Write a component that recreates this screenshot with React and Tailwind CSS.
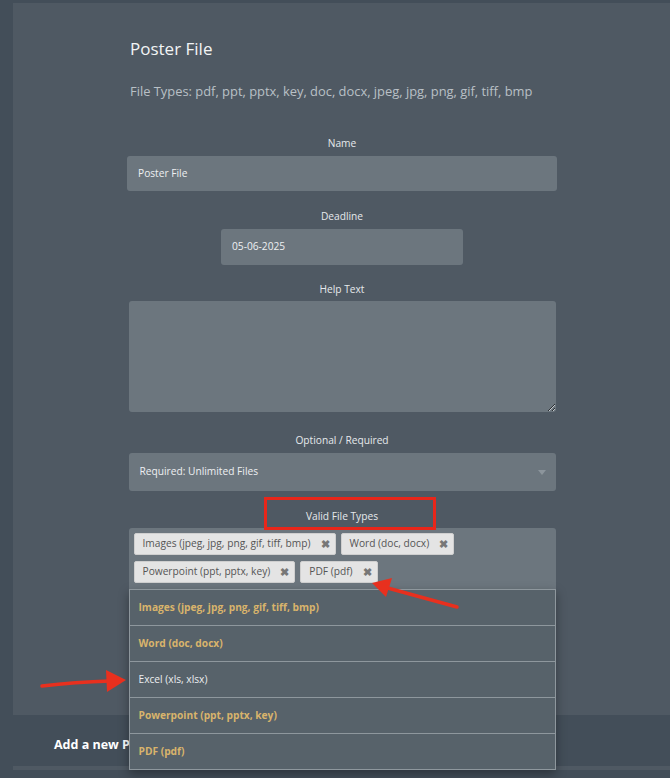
const TAGS = [
  ["Images (jpeg, jpg, png, gif, tiff, bmp)", "Word (doc, docx)"],
  ["Powerpoint (ppt, pptx, key)", "PDF (pdf)"],
];

const OPTIONS = [
  { label: "Images (jpeg, jpg, png, gif, tiff, bmp)", selected: true },
  { label: "Word (doc, docx)", selected: true },
  { label: "Excel (xls, xlsx)", selected: false },
  { label: "Powerpoint (ppt, pptx, key)", selected: true },
  { label: "PDF (pdf)", selected: true },
];

function Label({ children, className = "" }) {
  return (
    <div className={`text-center text-[10.2px] leading-[16px] text-[#e6e9ec] ${className}`}>
      {children}
    </div>
  );
}

function Tag({ text }) {
  return (
    <span className="flex h-[22px] items-center gap-[10px] rounded-[2px] border border-[#cfcfcf] bg-[#e4e4e4] pl-[8px] pr-[5px] text-[10.2px] text-[#555]">
      {text}
      <span className="text-[11px] font-bold text-[#777]">✖</span>
    </span>
  );
}

export default function App() {
  return (
    <div
      className="relative h-[778px] w-[670px] overflow-hidden bg-[#434e59]"
      style={{ fontFamily: '"Open Sans", "Noto Sans", sans-serif' }}
    >
      {/* Main panel */}
      <div className="ml-[13px] mt-[3px] h-[712px] bg-[#4f5963] pt-[34px]">
        <div className="ml-[114px] w-[430px]">
          <h2 className="pl-[3px] text-[17px] leading-[24px] text-[#f2f4f5]">Poster File</h2>
          <p className="mt-[20px] whitespace-nowrap pl-[3px] text-[12.9px] leading-[20px] text-[#b9c0c6]">
            File Types: pdf, ppt, pptx, key, doc, docx, jpeg, jpg, png, gif, tiff, bmp
          </p>

          <Label className="mt-[34px]">Name</Label>
          <div className="mt-[5px] flex h-[35px] items-center rounded-[3px] bg-[#6c767e] px-[11px] text-[10.2px] text-[#eef0f2]">
            Poster File
          </div>

          <Label className="mt-[17px]">Deadline</Label>
          <div className="mx-auto mt-[5px] flex h-[36px] w-[242px] items-center rounded-[3px] bg-[#6c767e] px-[11px] text-[10.2px] text-[#eef0f2]">
            05-06-2025
          </div>

          <Label className="mt-[16px]">Help Text</Label>
          <textarea
            readOnly
            className="mx-auto mt-[4px] block h-[111px] w-[427px] rounded-[3px] bg-[#6c767e] outline-none"
          />

          <Label className="mt-[20px]">Optional / Required</Label>
          <div className="mx-auto mt-[5px] flex h-[38px] w-[427px] items-center justify-between rounded-[3px] bg-[#6c767e] pl-[11px] pr-[10px] text-[10.2px] text-[#eef0f2]">
            Required: Unlimited Files
            <span className="h-0 w-0 border-x-[4px] border-t-[5px] border-x-transparent border-t-[#8c959c]" />
          </div>

          <Label className="mt-[17px]">Valid File Types</Label>
          <div className="relative mx-auto mt-[4px] w-[427px] rounded-t-[3px] bg-[#6c767e] p-[5px] pb-[6px]">
            <div className="flex flex-col gap-[6px]">
              {TAGS.map((row, i) => (
                <div key={i} className="flex gap-[5px]">
                  {row.map((t) => (
                    <Tag key={t} text={t} />
                  ))}
                </div>
              ))}
            </div>

            {/* Dropdown */}
            <ul className="absolute left-0 top-full z-10 w-[427px] border-x border-b border-[#8e979d] bg-[#57626a] shadow-[0_4px_10px_rgba(0,0,0,0.35)]">
              {OPTIONS.map((o) => (
                <li
                  key={o.label}
                  className={`flex h-[36px] items-center border-t border-[#8e979d] px-[9px] text-[10.2px] ${
                    o.selected ? "font-bold text-[#d9b46c]" : "text-[#eceef0]"
                  }`}
                >
                  {o.label}
                </li>
              ))}
            </ul>
          </div>
        </div>
      </div>

      {/* Below panel */}
      <div className="pl-[54px] pt-[21px] text-[12.5px] font-bold leading-[18px] text-white">
        Add a new Project File
      </div>
      <div className="ml-[13px] mt-[12px] h-[4px] bg-[#4f5963]" />

      {/* Annotations */}
      <div className="pointer-events-none absolute left-[264px] top-[497px] h-[33px] w-[172px] border-[3px] border-[#e8261a]" />
      <svg
        className="pointer-events-none absolute left-0 top-0 z-20"
        width="670"
        height="778"
        viewBox="0 0 670 778"
      >
        <path d="M457 607 L384 587" stroke="#e8301e" strokeWidth="3.5" strokeLinecap="round" fill="none" />
        <path d="M372 583 L392 578 L386 597 Z" fill="#e8301e" />
        <path d="M42 686 Q75 682 110 681" stroke="#e8301e" strokeWidth="3.5" strokeLinecap="round" fill="none" />
        <path d="M126 680 L106 670 L107 692 Z" fill="#e8301e" />
      </svg>
    </div>
  );
}
